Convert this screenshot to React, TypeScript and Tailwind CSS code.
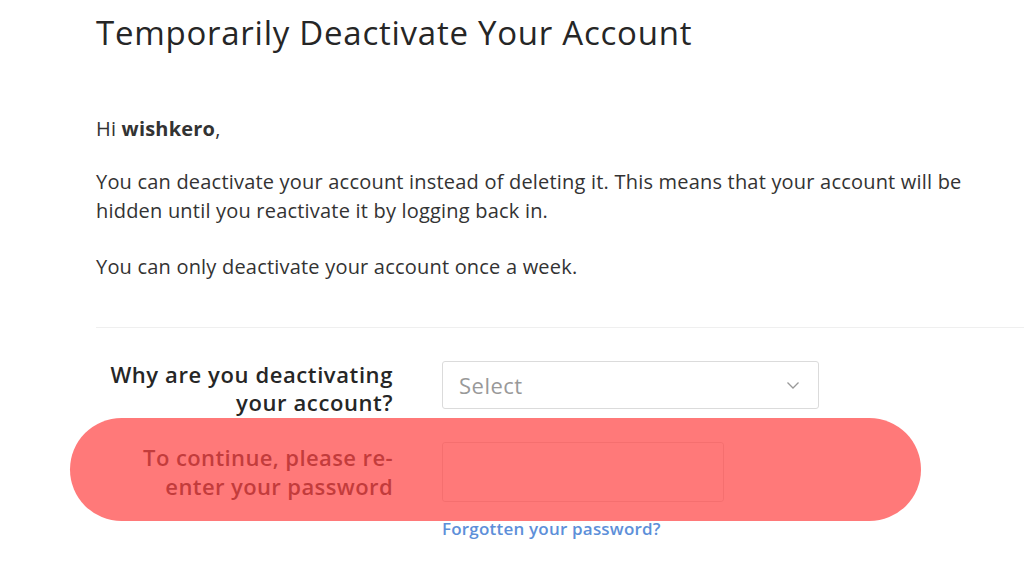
export default function App() {
  return (
    <div className="relative h-[572px] w-[1024px] overflow-hidden bg-white font-['Open_Sans',sans-serif] text-[#262626]">
      <div className="pl-[96px] pt-[11px]">
        <h1 className="text-[33px] font-normal leading-[44px] tracking-[0.75px] text-[#262626]">
          Temporarily Deactivate Your Account
        </h1>
        <div className="mt-[59px] w-[900px] text-[20px] leading-[29px] tracking-[0.2px] text-[#333]">
          <p>
            Hi <span className="font-bold">wishkero</span>,
          </p>
          <p className="mt-[24px]">
            You can deactivate your account instead of deleting it. This means that your account will be hidden until
            you reactivate it by logging back in.
          </p>
          <p className="mt-[27px]">You can only deactivate your account once a week.</p>
        </div>
        <div className="mt-[46px] h-px bg-[#efefef]" />
      </div>

      <div className="mt-[32px] flex flex-col">
        <div className="flex items-start gap-[49px]">
          <label className="w-[393px] text-right text-[22px] font-semibold leading-[28px] tracking-[0.6px] text-[#262626]">
            Why are you deactivating
            <br />
            your account?
          </label>
          <div className="mt-[1px] flex h-[48px] w-[377px] items-center justify-between rounded-[3px] border border-[#dbdbdb] bg-white pl-[16px] pr-[18px]">
            <span className="text-[22px] tracking-[0.5px] text-[#999]">Select</span>
            <svg width="14" height="9" viewBox="0 0 14 9" fill="none" stroke="#999" strokeWidth="1.3">
              <path d="M1.5 1.5 L7 7 L12.5 1.5" />
            </svg>
          </div>
        </div>

        <div className="mt-[27px] flex items-start gap-[49px]">
          <label className="w-[393px] text-right text-[22px] font-semibold leading-[29px] tracking-[0.4px] text-[#262626]">
            To continue, please re-
            <br />
            enter your password
          </label>
          <div className="flex flex-col">
            <input
              type="password"
              className="-mt-[1px] h-[60px] w-[282px] rounded-[3px] border border-[#dbdbdb] bg-white px-3 outline-none"
            />
            <a className="mt-[15px] text-[17px] font-semibold leading-[24px] tracking-[0.2px] text-[#5d8fd9]">
              Forgotten your password?
            </a>
          </div>
        </div>
      </div>

      <div className="pointer-events-none absolute left-[70px] top-[418px] h-[103px] w-[851px] rounded-full bg-[rgba(255,69,69,0.72)]" />
    </div>
  );
}
